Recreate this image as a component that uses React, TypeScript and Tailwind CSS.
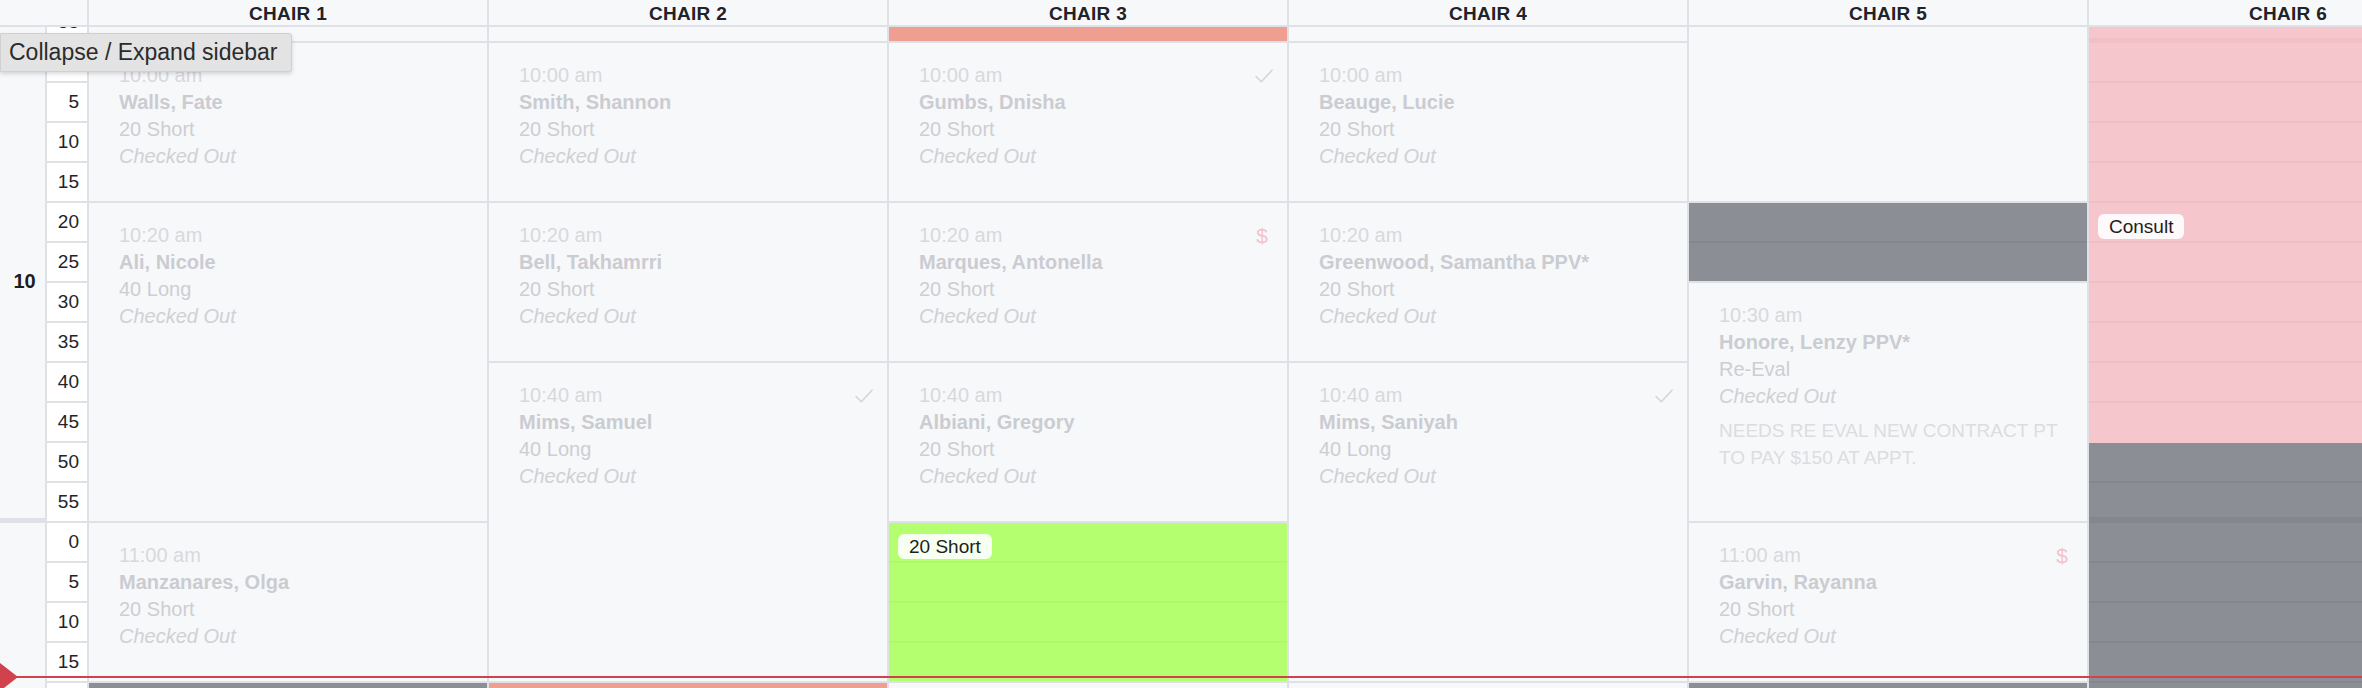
import React from "react";

const H: Record<number, string> = {
  1: "h-[40px]",
  2: "h-[80px]",
  4: "h-[160px]",
  5: "h-[200px]",
  6: "h-[240px]",
  8: "h-[320px]",
};

function Check() {
  return (
    <svg width="18" height="14" viewBox="0 0 18 14" fill="none" className="shrink-0">
      <path d="M1 7.5 L6.3 12.8 L17 1.2" stroke="#d4d5d9" strokeWidth="1.6" strokeLinecap="round" strokeLinejoin="round" />
    </svg>
  );
}

function Appt({
  rows,
  time,
  name,
  type,
  icon,
  note,
}: {
  rows: number;
  time: string;
  name: string;
  type: string;
  icon?: "check" | "dollar";
  note?: string;
}) {
  return (
    <div className={`${H[rows]} shrink-0 overflow-hidden border-b-2 border-[#dfe1e6] pl-[30px] pr-[14px] pt-[19px] text-[20px] leading-[27px]`}>
      <div className="flex items-center justify-between">
        <span className="text-[#d8d9dd]">{time}</span>
        {icon === "check" && <Check />}
        {icon === "dollar" && <span className="mr-[5px] text-[21px] text-[#f2c4c8]">$</span>}
      </div>
      <div className="font-bold text-[#cbccd1]">{name}</div>
      <div className="text-[#cdced2]">{type}</div>
      <div className="italic text-[#d0d1d5]">Checked Out</div>
      {note && <div className="mt-[7px] pr-[2px] text-[19px] leading-[27px] text-[#dcdde0]">{note}</div>}
    </div>
  );
}

function Empty({ rows }: { rows: number }) {
  return <div className={`${H[rows]} shrink-0 border-b-2 border-[#dfe1e6]`} />;
}

function Badge({ text }: { text: string }) {
  return (
    <span className="absolute left-[9px] top-[11px] h-[25px] rounded-[6px] bg-white/90 px-[11px] text-[19px] leading-[25px] text-[#1d1e22]">
      {text}
    </span>
  );
}

function Fill({
  n,
  bg,
  inner,
  last,
  badge,
}: {
  n: number;
  bg: string;
  inner: string;
  last: string;
  badge?: string;
}) {
  return (
    <div className="relative flex shrink-0 flex-col">
      {Array.from({ length: n }).map((_, i) => (
        <div key={i} className={`h-[40px] shrink-0 border-b-2 ${bg} ${i === n - 1 ? last : inner}`} />
      ))}
      {badge && <Badge text={badge} />}
    </div>
  );
}

const minutes = ["55", "0", "5", "10", "15", "20", "25", "30", "35", "40", "45", "50", "55", "0", "5", "10", "15", "20", "25"];

function Column({ children }: { children: React.ReactNode }) {
  return <div className="flex w-[400px] shrink-0 flex-col border-l-2 border-[#dfe1e6]">{children}</div>;
}

export default function App() {
  const chairs = ["CHAIR 1", "CHAIR 2", "CHAIR 3", "CHAIR 4", "CHAIR 5", "CHAIR 6"];
  return (
    <div className="relative flex h-[688px] w-[2362px] flex-col overflow-hidden bg-[#f7f8fa] font-['Liberation_Sans',Arial,sans-serif]">
      {/* header */}
      <div className="flex h-[27px] shrink-0 border-b-2 border-[#dfe1e6]">
        <div className="w-[87px] shrink-0" />
        {chairs.map((c) => (
          <div
            key={c}
            className="w-[400px] shrink-0 border-l-2 border-[#dfe1e6] pt-[3px] text-center text-[19px] font-bold leading-[22px] tracking-[0.3px] text-[#202328]"
          >
            {c}
          </div>
        ))}
      </div>

      {/* body */}
      <div className="relative flex-1 overflow-hidden">
        <div className="mt-[-24px] flex">
          {/* gutter */}
          <div className="flex w-[87px] shrink-0">
            <div className="flex w-[45px] shrink-0 flex-col">
              <div className="h-[40px] shrink-0 border-b-[5px] border-[#dfe1e6]" />
              <div className="flex h-[480px] shrink-0 items-center justify-center border-b-[5px] border-[#dfe1e6] pl-[4px] text-[20px] font-bold text-[#1d1e22]">
                10
              </div>
              <div className="flex h-[480px] shrink-0 items-center justify-center border-b-[5px] border-[#dfe1e6] pl-[4px] text-[20px] font-bold text-[#1d1e22]">
                11
              </div>
            </div>
            <div className="flex w-[42px] shrink-0 flex-col border-l-2 border-[#dfe1e6]">
              {minutes.map((m, i) => (
                <div
                  key={i}
                  className="h-[40px] shrink-0 border-b-2 border-[#dfe1e6] bg-white pr-[8px] text-right text-[19px] leading-[38px] text-[#222428]"
                >
                  {m}
                </div>
              ))}
            </div>
          </div>

          {/* chair 1 */}
          <Column>
            <Empty rows={1} />
            <Appt rows={4} time="10:00 am" name="Walls, Fate" type="20 Short" />
            <Appt rows={8} time="10:20 am" name="Ali, Nicole" type="40 Long" />
            <Appt rows={4} time="11:00 am" name="Manzanares, Olga" type="20 Short" />
            <Fill n={2} bg="bg-[#8b8e95]" inner="border-[#84878e]" last="border-[#84878e]" />
          </Column>

          {/* chair 2 */}
          <Column>
            <Empty rows={1} />
            <Appt rows={4} time="10:00 am" name="Smith, Shannon" type="20 Short" />
            <Appt rows={4} time="10:20 am" name="Bell, Takhamrri" type="20 Short" />
            <Appt rows={8} time="10:40 am" name="Mims, Samuel" type="40 Long" icon="check" />
            <Fill n={2} bg="bg-[#ef9f91]" inner="border-[#ef9f91]" last="border-[#ef9f91]" />
          </Column>

          {/* chair 3 */}
          <Column>
            <Fill n={1} bg="bg-[#ef9f91]" inner="border-[#dfe1e6]" last="border-[#dfe1e6]" />
            <Appt rows={4} time="10:00 am" name="Gumbs, Dnisha" type="20 Short" icon="check" />
            <Appt rows={4} time="10:20 am" name="Marques, Antonella" type="20 Short" icon="dollar" />
            <Appt rows={4} time="10:40 am" name="Albiani, Gregory" type="20 Short" />
            <Fill n={4} bg="bg-[#b3ff70]" inner="border-[#aef86d]" last="border-[#dfe1e6]" badge="20 Short" />
            <Empty rows={1} />
            <Empty rows={1} />
          </Column>

          {/* chair 4 */}
          <Column>
            <Empty rows={1} />
            <Appt rows={4} time="10:00 am" name="Beauge, Lucie" type="20 Short" />
            <Appt rows={4} time="10:20 am" name="Greenwood, Samantha PPV*" type="20 Short" />
            <Appt rows={8} time="10:40 am" name="Mims, Saniyah" type="40 Long" icon="check" />
            <Empty rows={1} />
            <Empty rows={1} />
          </Column>

          {/* chair 5 */}
          <Column>
            <Empty rows={5} />
            <Fill n={2} bg="bg-[#8b8e95]" inner="border-[#84878e]" last="border-[#dfe1e6]" />
            <Appt
              rows={6}
              time="10:30 am"
              name="Honore, Lenzy PPV*"
              type="Re-Eval"
              note="NEEDS RE EVAL NEW CONTRACT PT TO PAY $150 AT APPT."
            />
            <Appt rows={4} time="11:00 am" name="Garvin, Rayanna" type="20 Short" icon="dollar" />
            <Fill n={2} bg="bg-[#8b8e95]" inner="border-[#84878e]" last="border-[#84878e]" />
          </Column>

          {/* chair 6 */}
          <Column>
            <div className="h-[40px] shrink-0 border-b-[5px] border-[#f1c0c7] bg-[#f6c6cd]" />
            <Fill n={4} bg="bg-[#f6c6cd]" inner="border-[#f0bec5]" last="border-[#f0bec5]" />
            <Fill n={6} bg="bg-[#f6c6cd]" inner="border-[#f0bec5]" last="border-[#f6c6cd]" badge="Consult" />
            <div className="h-[40px] shrink-0 border-b-2 border-[#84878e] bg-[#8b8e95]" />
            <div className="h-[40px] shrink-0 border-b-[6px] border-[#84878e] bg-[#8b8e95]" />
            <Fill n={6} bg="bg-[#8b8e95]" inner="border-[#84878e]" last="border-[#84878e]" />
          </Column>
        </div>
      </div>

      {/* current time indicator */}
      <div className="pointer-events-none absolute left-0 right-0 top-[676px] h-[2px] bg-[#d0424c]" />
      <div className="pointer-events-none absolute left-0 top-[663px] h-0 w-0 border-y-[14px] border-l-[18px] border-y-transparent border-l-[#d0424c]" />

      {/* tooltip */}
      <div className="absolute left-0 top-[33px] h-[39px] w-[292px] rounded-r-[3px] border border-[#d0d0d0] bg-[#e3e3e3] pl-[8px] text-[23px] leading-[37px] text-[#2b2b2b] shadow-[0_2px_4px_rgba(0,0,0,0.15)]">
        Collapse / Expand sidebar
      </div>
    </div>
  );
}
